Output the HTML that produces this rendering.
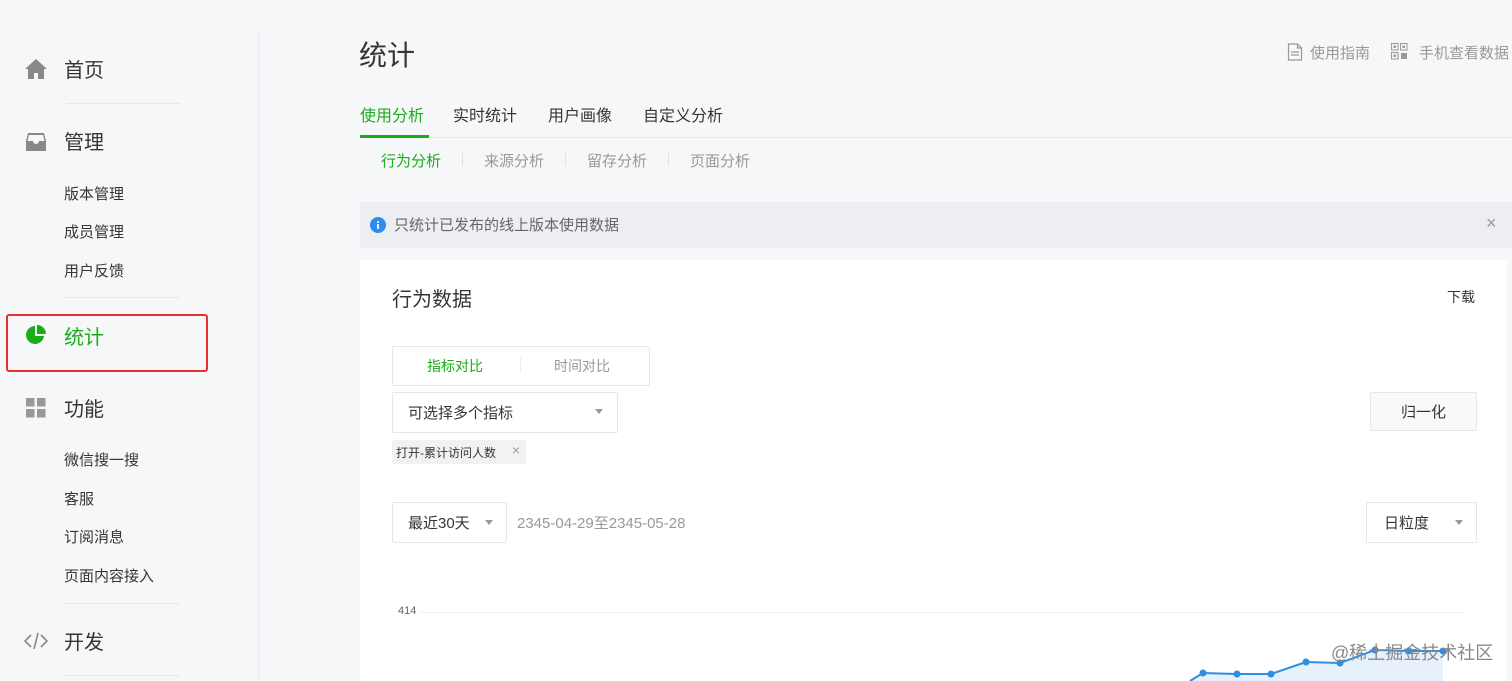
<!DOCTYPE html><html><head><meta charset="utf-8"><style>
body{margin:0;width:1512px;height:681px;overflow:hidden;background:#f6f7f9;font-family:"Liberation Sans","Noto Sans CJK SC",sans-serif;position:relative;color:#353535}
.a{position:absolute;white-space:nowrap}
.h{font-size:20px;color:#353535}
.s{font-size:15px;color:#353535}
.ln{position:absolute;height:1px;background:#e7e7eb}
</style></head><body>
<div class="a" style="left:258px;top:30px;width:1px;height:651px;background:#ebedf0"></div>
<svg class="a" style="left:24px;top:58px" width="24" height="22" viewBox="0 0 24 22"><path d="M12 1 L23 11 H20 V21 H14 V15 H10 V21 H4 V11 H1 Z" fill="#888"/></svg>
<div class="a h" style="left:64px;top:54px">首页</div>
<div class="ln" style="left:66px;top:103px;width:114px"></div>
<svg class="a" style="left:25px;top:132px" width="22" height="20" viewBox="0 0 22 20"><path d="M3 1h16l2 8v10H1V9z" fill="#888"/><path d="M4 3h14l1.5 6H14a3 3 0 0 1-6 0H2.5z" fill="#f6f7f9"/></svg>
<div class="a h" style="left:64px;top:126px">管理</div>
<div class="a s" style="left:64px;top:183px">版本管理</div>
<div class="a s" style="left:64px;top:221px">成员管理</div>
<div class="a s" style="left:64px;top:260px">用户反馈</div>
<div class="ln" style="left:64px;top:297px;width:116px"></div>
<div class="a" style="left:6px;top:314px;width:198px;height:54px;border:2px solid #e8322d;border-radius:3px"></div>
<svg class="a" style="left:25px;top:324px" width="22" height="22" viewBox="0 0 22 22"><path d="M10 2a9 9 0 1 0 9 10h-9z" fill="#1aad19"/><path d="M12 1v9h9a9 9 0 0 0-9-9z" fill="#1aad19"/></svg>
<div class="a h" style="left:64px;top:321px;color:#1aad19">统计</div>
<svg class="a" style="left:26px;top:398px" width="20" height="20"><rect x="0" y="0" width="8.5" height="8.5" fill="#999"/><rect x="11" y="0" width="8.5" height="8.5" fill="#999"/><rect x="0" y="11" width="8.5" height="8.5" fill="#999"/><rect x="11" y="11" width="8.5" height="8.5" fill="#999"/></svg>
<div class="a h" style="left:64px;top:393px">功能</div>
<div class="a s" style="left:64px;top:449px">微信搜一搜</div>
<div class="a s" style="left:64px;top:488px">客服</div>
<div class="a s" style="left:64px;top:526px">订阅消息</div>
<div class="a s" style="left:64px;top:565px">页面内容接入</div>
<div class="ln" style="left:64px;top:603px;width:116px"></div>
<svg class="a" style="left:24px;top:631px" width="24" height="20" viewBox="0 0 24 20"><path d="M7 4 1 10l6 6M17 4l6 6-6 6M14 2 10 18" stroke="#888" stroke-width="1.6" fill="none"/></svg>
<div class="a h" style="left:64px;top:626px">开发</div>
<div class="ln" style="left:64px;top:675px;width:116px"></div>
<div class="a" style="left:359px;top:34px;font-size:28px;color:#353535">统计</div>
<svg class="a" style="left:1287px;top:43px" width="16" height="18" viewBox="0 0 16 18"><path d="M1.5 1h9l4 4v12h-13z M10.5 1v4h4 M4 9h8 M4 12h8" stroke="#999" stroke-width="1.2" fill="none"/></svg>
<div class="a" style="left:1310px;top:42px;font-size:15px;color:#999">使用指南</div>
<svg class="a" style="left:1391px;top:43px" width="17" height="17"><rect x="0.5" y="0.5" width="6.5" height="6.5" fill="none" stroke="#999"/><rect x="9.5" y="0.5" width="6.5" height="6.5" fill="none" stroke="#999"/><rect x="0.5" y="9.5" width="6.5" height="6.5" fill="none" stroke="#999"/><rect x="10" y="10" width="6" height="6" fill="#999"/><rect x="2.5" y="2.5" width="2.5" height="2.5" fill="#999"/><rect x="11.5" y="2.5" width="2.5" height="2.5" fill="#999"/><rect x="2.5" y="11.5" width="2.5" height="2.5" fill="#999"/></svg>
<div class="a" style="left:1419px;top:42px;font-size:15px;color:#999">手机查看数据</div>
<div class="a" style="left:360px;top:102px;font-size:16px;color:#1aad19">使用分析</div>
<div class="a" style="left:453px;top:102px;font-size:16px">实时统计</div>
<div class="a" style="left:548px;top:102px;font-size:16px">用户画像</div>
<div class="a" style="left:643px;top:102px;font-size:16px">自定义分析</div>
<div class="ln" style="left:360px;top:137px;width:1152px"></div>
<div class="a" style="left:360px;top:135px;width:69px;height:3px;background:#1aad19"></div>
<div class="a" style="left:381px;top:150px;font-size:15px;color:#1aad19">行为分析</div>
<div class="a" style="left:484px;top:150px;font-size:15px;color:#999">来源分析</div>
<div class="a" style="left:587px;top:150px;font-size:15px;color:#999">留存分析</div>
<div class="a" style="left:690px;top:150px;font-size:15px;color:#999">页面分析</div>
<div class="a" style="left:462px;top:153px;width:1px;height:13px;background:#e0e0e0"></div>
<div class="a" style="left:565px;top:153px;width:1px;height:13px;background:#e0e0e0"></div>
<div class="a" style="left:668px;top:153px;width:1px;height:13px;background:#e0e0e0"></div>
<div class="a" style="left:360px;top:202px;width:1152px;height:46px;background:#eceef1"></div>
<svg class="a" style="left:370px;top:217px" width="16" height="16"><circle cx="8" cy="8" r="8" fill="#2d8cf0"/><rect x="7.1" y="7" width="1.8" height="5" fill="#fff"/><rect x="7.1" y="4" width="1.8" height="1.8" fill="#fff"/></svg>
<div class="a" style="left:394px;top:214px;font-size:15px;color:#666">只统计已发布的线上版本使用数据</div>
<div class="a" style="left:1486px;top:213px;font-size:18px;color:#999">×</div>
<div class="a" style="left:360px;top:260px;width:1147px;height:421px;background:#fff"></div>
<div class="a" style="left:392px;top:283px;font-size:20px">行为数据</div>
<div class="a" style="left:1447px;top:287px;font-size:14px">下载</div>
<div class="a" style="left:392px;top:346px;width:256px;height:38px;border:1px solid #e7e7eb;border-radius:2px"></div>
<div class="a" style="left:520px;top:357px;width:1px;height:16px;background:#eee"></div>
<div class="a" style="left:427px;top:356px;font-size:14px;color:#1aad19">指标对比</div>
<div class="a" style="left:554px;top:356px;font-size:14px;color:#999">时间对比</div>
<div class="a" style="left:392px;top:392px;width:224px;height:39px;border:1px solid #e7e7eb;border-radius:2px"></div>
<div class="a" style="left:408px;top:402px;font-size:15px">可选择多个指标</div>
<div class="a" style="left:595px;top:409px;border:4px solid transparent;border-top:5px solid #999"></div>
<div class="a" style="left:392px;top:440px;width:134px;height:24px;background:#f2f2f4"></div>
<div class="a" style="left:396px;top:444px;font-size:12px">打开-累计访问人数</div>
<div class="a" style="left:512px;top:442px;font-size:14px;color:#999">×</div>
<div class="a" style="left:1370px;top:392px;width:105px;height:37px;border:1px solid #e7e7eb;border-radius:2px;background:#f9f9f9"></div>
<div class="a" style="left:1401px;top:401px;font-size:15px">归一化</div>
<div class="a" style="left:392px;top:502px;width:113px;height:39px;border:1px solid #e7e7eb;border-radius:2px"></div>
<div class="a" style="left:408px;top:512px;font-size:15px">最近30天</div>
<div class="a" style="left:485px;top:520px;border:4px solid transparent;border-top:5px solid #999"></div>
<div class="a" style="left:517px;top:512px;font-size:15px;color:#999">2345-04-29至2345-05-28</div>
<div class="a" style="left:1366px;top:502px;width:109px;height:39px;border:1px solid #e7e7eb;border-radius:2px"></div>
<div class="a" style="left:1384px;top:512px;font-size:15px">日粒度</div>
<div class="a" style="left:1455px;top:520px;border:4px solid transparent;border-top:5px solid #999"></div>
<div class="a" style="left:398px;top:605px;font-size:11px;color:#666">414</div>
<div class="ln" style="left:420px;top:612px;width:1042px;background:#f0f0f0"></div>
<svg class="a" style="left:1150px;top:630px" width="300" height="51"><path d="M40 51 L53 43 L87 44 L121 44 L156 32 L190 33 L225 20 L259 21 L293 21 V51Z" fill="#e6f1fc"/><path d="M40 51 L53 43 L87 44 L121 44 L156 32 L190 33 L225 20 L259 21 L293 21" stroke="#2f8ee0" stroke-width="2" fill="none"/><g fill="#2f8ee0"><circle cx="53" cy="43" r="3.5"/><circle cx="87" cy="44" r="3.5"/><circle cx="121" cy="44" r="3.5"/><circle cx="156" cy="32" r="3.5"/><circle cx="190" cy="33" r="3.5"/><circle cx="225" cy="20" r="3.5"/><circle cx="259" cy="21" r="3.5"/><circle cx="293" cy="21" r="3.5"/></g></svg>
<div class="a" style="left:1331px;top:639px;font-size:18px;color:#888">@稀土掘金技术社区</div>
</body></html>
